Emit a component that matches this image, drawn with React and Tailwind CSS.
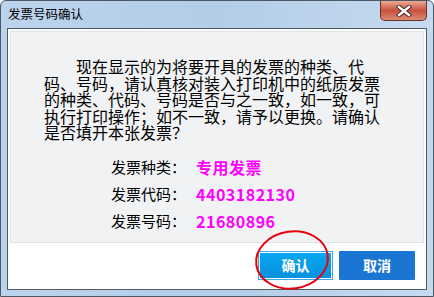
import React from 'react'

const cjk = { fontFamily: '"Noto Sans CJK SC", "Noto Sans", sans-serif' }

const lines = [
  '　　现在显示的为将要开具的发票的种类、代',
  '码、号码，请认真核对装入打印机中的纸质发票',
  '的种类、代码、号码是否与之一致，如一致，可',
  '执行打印操作；如不一致，请予以更换。请确认',
  '是否填开本张发票？',
]

const rows = [
  ['发票种类：', '专用发票'],
  ['发票代码：', '4403182130'],
  ['发票号码：', '21680896'],
]

function CloseButton() {
  return (
    <div className="absolute right-[6px] top-0 flex h-[20px] w-[47px] items-center justify-center rounded-b-[5px] border border-t-0 border-[#6e3026] bg-gradient-to-b from-[#e9a996] via-[#c8503b] to-[#d98a75]">
      <svg width="16" height="12" viewBox="0 0 16 12">
        <path d="M3 2 L13 10 M13 2 L3 10" stroke="#3c2020" strokeWidth="4.2" strokeLinecap="square" />
        <path d="M3 2 L13 10 M13 2 L3 10" stroke="#ffffff" strokeWidth="2.4" strokeLinecap="square" />
      </svg>
    </div>
  )
}

export default function App() {
  return (
    <div className="h-[297px] w-[434px] bg-white" style={cjk}>
      <div className="relative flex h-[297px] w-[434px] flex-col rounded-t-[6px] border border-[#4d5866] bg-gradient-to-r from-[#bcd3ec] via-[#b3cde8] to-[#c6daef] px-[6px] pb-[6px]">
        <div className="flex h-[27px] shrink-0 items-center pl-[1px] text-[12.5px] text-black">
          发票号码确认
        </div>
        <CloseButton />

        <div className="relative flex flex-1 flex-col border border-[#4f5a66] bg-white p-[2px]">
          <div className="h-[212px] border border-[#dbe1e6] bg-[#f1f2f4] pl-[33px] pt-[26px]">
            <div className="text-[16px] leading-[16.5px] text-black">
              {lines.map((l, i) => (
                <div key={i} className="whitespace-nowrap">{l}</div>
              ))}
            </div>
            <div className="mt-[13px] flex flex-col">
              {rows.map(([k, v]) => (
                <div key={k} className="flex h-[27px] items-center">
                  <span className="w-[85px] pl-[67px] text-[15px] whitespace-nowrap text-black" style={{ boxSizing: 'content-box' }}>{k}</span>
                  <span className="text-[16px] font-bold tracking-[0.5px] text-[#ff00ff]">{v}</span>
                </div>
              ))}
            </div>
          </div>

          <div className="mt-[8px] flex justify-end gap-[6px] pr-[9px]">
            <button className="flex h-[29px] w-[75px] items-center justify-center border border-[#3aa9ea] bg-gradient-to-b from-[#0aa8ef] to-[#0890dd] text-[14px] font-bold text-white outline outline-1 -outline-offset-2 outline-white">
              确认
            </button>
            <button className="flex h-[29px] w-[76px] items-center justify-center rounded-[1px] bg-[#1b76d3] text-[14px] font-bold text-white">
              取消
            </button>
          </div>

          <svg className="pointer-events-none absolute left-[244px] top-[199px]" width="80" height="64" viewBox="0 0 80 64">
            <ellipse cx="40" cy="32" rx="36" ry="28.5" fill="none" stroke="#e8000b" strokeWidth="2" transform="rotate(-8 40 32)" />
          </svg>
        </div>
      </div>
    </div>
  )
}
